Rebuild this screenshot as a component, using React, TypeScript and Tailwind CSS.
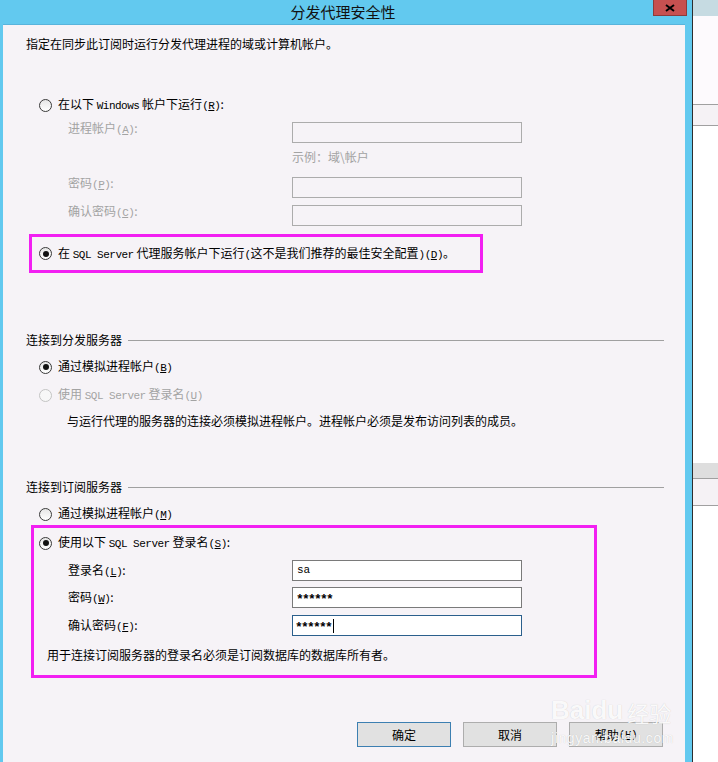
import type { ReactNode } from 'react';

// half-width latin in the dialog font is fixed pitch, about 6px per char
const M = ({ children }: { children: ReactNode }) => (
  <span className="font-['Liberation_Mono',monospace] text-[11px] tracking-[-0.5px]">{children}</span>
);

const Key = ({ k }: { k: string }) => (
  <M>
    (<span className="underline">{k}</span>)
  </M>
);

const Radio = ({ checked = false, disabled = false }: { checked?: boolean; disabled?: boolean }) => (
  <span
    className={
      disabled
        ? 'w-[13px] h-[13px] rounded-full border border-[#c4c4c4] bg-[#f7f7f7] flex items-center justify-center shrink-0'
        : 'w-[13px] h-[13px] rounded-full border border-[#3a3a3a] bg-gradient-to-b from-[#e6e6e6] to-white flex items-center justify-center shrink-0'
    }
  >
    {checked && <span className="w-[6px] h-[6px] rounded-full bg-[#111]" />}
  </span>
);

const DisabledRow = ({ label, k, mt }: { label: string; k: string; mt: string }) => (
  <div className={`flex items-start h-[23px] ${mt}`}>
    <span className="ml-[42px] w-[224px] text-[#a3a3a3]">
      {label}
      <Key k={k} />:
    </span>
    <div className="mt-[2px] w-[230px] h-[21px] border border-[#acacac]" />
  </div>
);

const LoginRow = ({ label, k, value, masked = false, focused = false, mt }: { label: string; k: string; value: string; masked?: boolean; focused?: boolean; mt: string }) => (
  <div className={`flex items-center h-[21px] ${mt}`}>
    <span className="ml-[29px] w-[224px]">
      {label}
      <Key k={k} />:
    </span>
    <div
      className={
        focused
          ? 'w-[230px] h-[21px] bg-white border border-[#2b5f8c] pl-[2px] flex items-center'
          : 'w-[230px] h-[21px] bg-white border border-[#7a7a7a] pl-[3px] flex items-center'
      }
    >
      {masked ? (
        <span className="font-['Liberation_Mono',monospace] text-[13px] font-bold leading-none tracking-[-1.8px] translate-y-[2px]">{value}</span>
      ) : (
        <span className="font-['Liberation_Mono',monospace] text-[11px] leading-none pl-[1px]">{value}</span>
      )}
      {focused && <span className="ml-[2px] w-px h-[14px] bg-black" />}
    </div>
  </div>
);

const Button = ({ children, primary = false }: { children: ReactNode; primary?: boolean }) => (
  <button
    className={
      primary
        ? 'w-[94px] h-[25px] bg-[#e1e1e1] border border-[#3c7fb1] flex items-center justify-center'
        : 'w-[94px] h-[25px] bg-[#e1e1e1] border border-[#adadad] flex items-center justify-center'
    }
  >
    {children}
  </button>
);

export default function App() {
  return (
    <div className="relative w-[718px] h-[762px] flex overflow-hidden bg-white text-[12px] leading-[16px] text-black font-['Noto_Sans_CJK_SC','Noto_Sans',sans-serif]">
      {/* dialog */}
      <div className="w-[692px] h-full flex flex-col bg-[#62c9ef]">
        <div className="relative h-[24px] shrink-0 flex items-center justify-center pr-[6px]">
          <span className="text-[15px] text-[#111]">分发代理安全性</span>
          <div className="absolute right-[5px] top-0 w-[34px] h-[16px] bg-[#c75050] border border-t-0 border-[#8c3b3b] flex items-center justify-center">
            <svg width="10" height="8" viewBox="0 0 10 8">
              <path d="M1 1L9 7M9 1L1 7" stroke="#000" strokeWidth="2" />
            </svg>
          </div>
        </div>

        <div className="flex-1 ml-[3px] mr-[7px] bg-[#f6f3f7] border-t border-[#58b4dc] pl-[23px] pr-[21px] pt-[11px]">
          <p className="h-[16px]">指定在同步此订阅时运行分发代理进程的域或计算机帐户。</p>

          <div className="mt-[45px] ml-[13px] flex items-center gap-[6px] h-[16px]">
            <Radio />
            <span>
              在以下 <M>Windows</M> 帐户下运行<Key k="R" />:
            </span>
          </div>

          <DisabledRow label="进程帐户" k="A" mt="mt-[7px]" />
          <p className="mt-[6px] ml-[266px] h-[16px] text-[#a3a3a3]">示例：域\帐户</p>
          <DisabledRow label="密码" k="P" mt="mt-[10px]" />
          <DisabledRow label="确认密码" k="C" mt="mt-[5px]" />

          <div className="mt-[8px] ml-[3px] w-[454px] h-[39px] border-[3px] border-[#f21ff2] flex items-center pl-[7px] gap-[6px]">
            <Radio checked />
            <span>
              在 <M>SQL Server</M> 代理服务帐户下运行<M>(</M>这不是我们推荐的最佳安全配置<M>)</M>
              <Key k="D" />。
            </span>
          </div>

          {/* 连接到分发服务器 */}
          <div className="mt-[59px] flex items-center h-[16px]">
            <span>连接到分发服务器</span>
            <div className="ml-[6px] flex-1 h-px bg-[#a0a0a0]" />
          </div>
          <div className="mt-[11px] ml-[13px] flex items-center gap-[6px] h-[16px]">
            <Radio checked />
            <span>
              通过模拟进程帐户<Key k="B" />
            </span>
          </div>
          <div className="mt-[12px] ml-[13px] flex items-center gap-[6px] h-[16px] text-[#a3a3a3]">
            <Radio disabled />
            <span>
              使用 <M>SQL Server</M> 登录名<Key k="U" />
            </span>
          </div>
          <p className="mt-[10px] ml-[41px] h-[16px]">与运行代理的服务器的连接必须模拟进程帐户。进程帐户必须是发布访问列表的成员。</p>

          {/* 连接到订阅服务器 */}
          <div className="mt-[50px] flex items-center h-[16px]">
            <span>连接到订阅服务器</span>
            <div className="ml-[6px] flex-1 h-px bg-[#a0a0a0]" />
          </div>
          <div className="mt-[11px] ml-[13px] flex items-center gap-[6px] h-[16px]">
            <Radio />
            <span>
              通过模拟进程帐户<Key k="M" />
            </span>
          </div>

          <div className="mt-[3px] ml-[5px] w-[566px] border-[3px] border-[#f21ff2] pl-[5px] pt-[7px] pb-[12px]">
            <div className="flex items-center gap-[6px] h-[16px]">
              <Radio checked />
              <span>
                使用以下 <M>SQL Server</M> 登录名<Key k="S" />:
              </span>
            </div>
            <LoginRow label="登录名" k="L" value="sa" mt="mt-[9px]" />
            <LoginRow label="密码" k="W" value="******" masked mt="mt-[6px]" />
            <LoginRow label="确认密码" k="F" value="******" masked focused mt="mt-[7px]" />
            <p className="mt-[11px] ml-[8px] h-[16px]">用于连接订阅服务器的登录名必须是订阅数据库的数据库所有者。</p>
          </div>

          <div className="mt-[44px] mr-[1px] flex justify-end gap-[12px]">
            <Button primary>确定</Button>
            <Button>取消</Button>
            <Button>
              帮助<Key k="H" />
            </Button>
          </div>
        </div>
      </div>

      <div className="w-px h-full bg-[#2e2e2e]" />

      {/* window behind the dialog */}
      <div className="flex-1 flex flex-col">
        <div className="h-[16px] bg-[#c6dbe2]" />
        <div className="h-[89px] bg-[#fdfafd] border-b border-[#a0a0a0]" />
        <div className="h-[21px] bg-[#f5f2f5] border-b border-[#a0a0a0]" />
        <div className="h-[337px] bg-white" />
        <div className="h-[16px] bg-[#dedede] border-b border-[#a0a0a0]" />
        <div className="h-[27px] bg-[#f5f2f5] border-b border-[#a0a0a0]" />
        <div className="flex-1 bg-white" />
      </div>

      {/* watermark */}
      <div className="absolute left-[551px] top-[697px] pointer-events-none text-white/90 [text-shadow:0_0_1px_rgba(0,0,0,0.2)]">
        <div className="flex items-end gap-[4px] leading-none">
          <span className="text-[26px] font-bold font-['Liberation_Sans',sans-serif]">Baidu</span>
          <span className="text-[22px]">经验</span>
        </div>
        <div className="mt-[8px] text-[14px] leading-none tracking-[0.6px] font-['Liberation_Sans',sans-serif]">jingyan.baidu.com</div>
      </div>
    </div>
  );
}
